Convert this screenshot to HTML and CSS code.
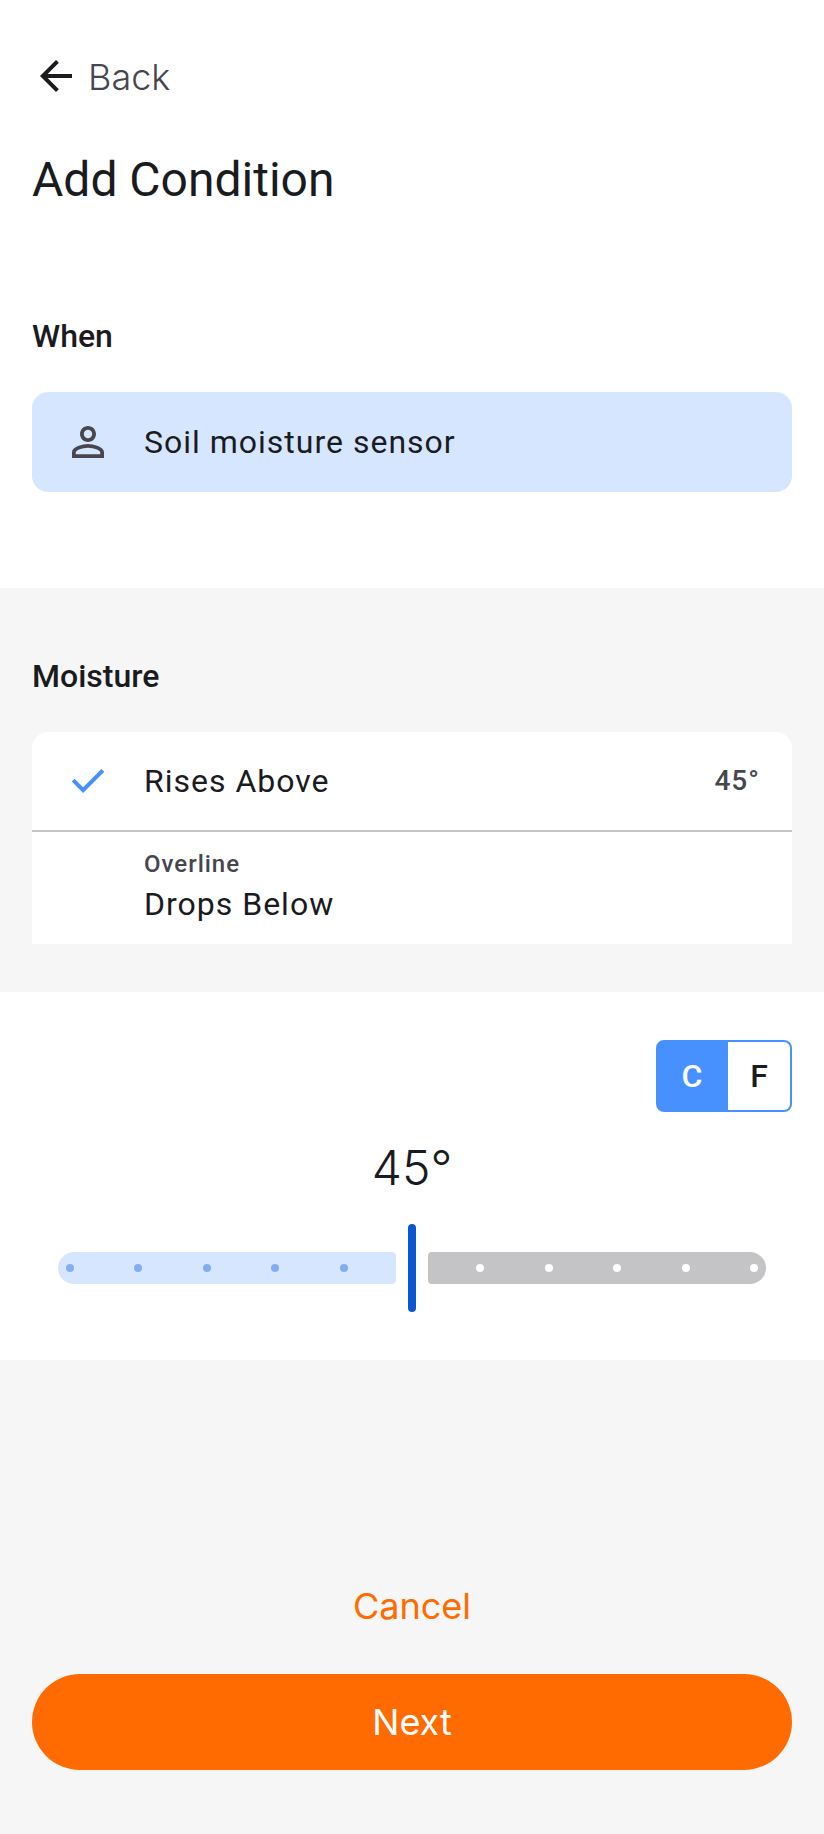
FILE: index.html
```html
<!DOCTYPE html>
<html lang="en">
<head>
<meta charset="utf-8">
<meta name="viewport" content="width=device-width, initial-scale=1">
<title>Add Condition</title>
<link rel="stylesheet" href="styles.css">
</head>
<body>
<main class="screen">
  <section class="intro">
    <a class="back" href="#">
      <svg class="icon" viewBox="0 0 24 24" aria-hidden="true"><path d="M7.825 13l5.6 5.6L12 20l-8-8 8-8 1.425 1.4-5.6 5.6H20v2z"/></svg>
      <span>Back</span>
    </a>
    <h1 class="title">Add Condition</h1>
    <h2 class="heading">When</h2>
    <button class="sensor" type="button">
      <svg class="icon" viewBox="0 0 24 24" aria-hidden="true"><path d="M12 5.9a2.1 2.1 0 1 1 0 4.2 2.1 2.1 0 0 1 0-4.2m0 9c2.97 0 6.1 1.46 6.1 2.1v1.1H5.9V17c0-.64 3.13-2.1 6.1-2.1M12 4C9.79 4 8 5.79 8 8s1.79 4 4 4 4-1.79 4-4-1.79-4-4-4m0 9c-2.67 0-8 1.34-8 4v3h16v-3c0-2.66-5.33-4-8-4"/></svg>
      <span>Soil moisture sensor</span>
    </button>
  </section>

  <section class="moisture">
    <h2 class="heading" id="moisture-title">Moisture</h2>
    <div class="options" role="radiogroup" aria-labelledby="moisture-title">
      <label class="option">
        <input class="option-input" type="radio" name="rule" checked>
        <svg class="icon check" viewBox="0 0 24 24" aria-hidden="true"><path d="M9.55 18l-5.7-5.7 1.425-1.425L9.55 15.15l9.175-9.175L20.15 7.4z"/></svg>
        <span class="option-text">Rises Above</span>
        <span class="option-value">45°</span>
      </label>
      <label class="option option-tall">
        <input class="option-input" type="radio" name="rule">
        <svg class="icon check" viewBox="0 0 24 24" aria-hidden="true"><path d="M9.55 18l-5.7-5.7 1.425-1.425L9.55 15.15l9.175-9.175L20.15 7.4z"/></svg>
        <span class="option-text"><span class="overline">Overline</span>Drops Below</span>
      </label>
    </div>
  </section>

  <section class="level">
    <div class="units" role="group" aria-label="Unit">
      <button class="unit unit-on" type="button" aria-pressed="true">C</button>
      <button class="unit unit-off" type="button" aria-pressed="false">F</button>
    </div>
    <label class="reading" for="level">45°</label>
    <div class="slider">
      <span class="track track-active"></span>
      <span class="track track-rest"></span>
      <div class="ticks">
        <i class="tick tick-active"></i><i class="tick tick-active"></i><i class="tick tick-active"></i><i class="tick tick-active"></i><i class="tick tick-active"></i>
        <i class="tick tick-under"></i>
        <i class="tick"></i><i class="tick"></i><i class="tick"></i><i class="tick"></i><i class="tick"></i>
      </div>
      <input class="range" id="level" type="range" min="0" max="90" value="45">
    </div>
  </section>

  <footer class="actions">
    <button class="action" type="button">Cancel</button>
    <button class="action action-main" type="button">Next</button>
  </footer>
</main>
</body>
</html>
```

FILE: styles.css
```css
* {
  box-sizing: border-box;
}

body {
  margin: 0;
  background: #f6f6f6;
  color: #1a1b1f;
  font-family: Roboto, sans-serif;
  font-size: 32px;
}

button {
  border: 0;
  background: none;
  color: inherit;
  font: inherit;
  cursor: pointer;
}

.screen {
  display: flex;
  flex-direction: column;
  min-height: 100vh;
}

.icon {
  flex: none;
  width: 48px;
  height: 48px;
  fill: currentColor;
}

.intro {
  padding: 52px 32px 96px;
  background: #fff;
}

.back {
  display: flex;
  align-items: center;
  gap: 8px;
  width: fit-content;
  height: 48px;
  color: #1a1b1f;
  font-family: Inter, sans-serif;
  font-size: 36px;
  font-weight: 300;
  line-height: 48px;
  text-decoration: none;
}

.back span {
  padding-top: 2px;
  color: #46464f;
}

.title {
  margin: 48px 0 100px;
  font-size: 48px;
  font-weight: 400;
  line-height: 64px;
}

.heading {
  margin: 0 0 32px;
  font-size: 32px;
  font-weight: 500;
  line-height: 48px;
}

.sensor {
  display: flex;
  align-items: center;
  gap: 32px;
  width: 100%;
  min-height: 100px;
  padding: 0 32px;
  border-radius: 16px;
  background: #d7e6ff;
  letter-spacing: 1px;
  text-align: left;
}

.sensor .icon {
  color: #49454f;
}

.moisture {
  padding: 64px 32px 48px;
}

.options {
  overflow: hidden;
  border-radius: 16px 16px 0 0;
  background: #fff;
  letter-spacing: 1px;
}

.option {
  display: flex;
  align-items: center;
  gap: 32px;
  position: relative;
  min-height: 98px;
  padding: 0 32px;
  line-height: 40px;
}

.option-tall {
  padding: 12px 32px 20px;
  border-top: 2px solid #c4c4c9;
}

.option-input {
  position: absolute;
  opacity: 0;
}

.check {
  visibility: hidden;
  color: #4791ff;
}

.option-input:checked + .check {
  visibility: visible;
}

.option-text {
  flex: 1;
}

.overline {
  display: block;
  color: #46464f;
  font-size: 24px;
  font-weight: 500;
}

.option-value {
  color: #46464f;
  font-size: 28px;
  font-weight: 500;
}

.level {
  display: flex;
  flex-direction: column;
  padding: 48px 32px;
  background: #fff;
}

.units {
  display: flex;
  align-self: flex-end;
}

.unit {
  height: 72px;
  padding: 0;
  border: 2px solid #4791ff;
  font-weight: 500;
}

.unit-on {
  width: 72px;
  border-radius: 8px 0 0 8px;
  background: #4791ff;
  color: #fff;
}

.unit-off {
  width: 64px;
  border-left: 0;
  border-radius: 0 8px 8px 0;
}

.reading {
  margin: 24px 0;
  font-family: Inter, sans-serif;
  font-size: 48px;
  font-weight: 300;
  line-height: 64px;
  text-align: center;
}

.slider {
  display: flex;
  align-items: center;
  gap: 32px;
  position: relative;
  height: 88px;
  margin: 0 26px;
}

.track {
  flex: 1;
  height: 32px;
}

.track-active {
  border-radius: 16px 4px 4px 16px;
  background: #d7e6ff;
}

.track-rest {
  border-radius: 4px 16px 16px 4px;
  background: #c4c4c6;
}

.ticks {
  display: flex;
  align-items: center;
  justify-content: space-between;
  position: absolute;
  inset: 0;
  padding: 0 8px;
}

.tick {
  width: 8px;
  height: 8px;
  border-radius: 50%;
  background: #fff;
}

.tick-active {
  background: #82adee;
}

.tick-under {
  visibility: hidden;
}

.range {
  position: absolute;
  inset: 0;
  width: 100%;
  height: 100%;
  margin: 0;
  background: none;
  appearance: none;
}

.range::-webkit-slider-thumb {
  width: 8px;
  height: 88px;
  border-radius: 4px;
  background: #0b57d0;
  appearance: none;
}

.actions {
  display: flex;
  flex-direction: column;
  gap: 20px;
  margin-top: auto;
  padding: 0 32px 64px;
}

.action {
  height: 96px;
  border-radius: 48px;
  color: #ff6b00;
  font-family: Inter, sans-serif;
  font-size: 36px;
  font-weight: 400;
}

.action-main {
  background: #ff6b00;
  color: #fff;
}
```
